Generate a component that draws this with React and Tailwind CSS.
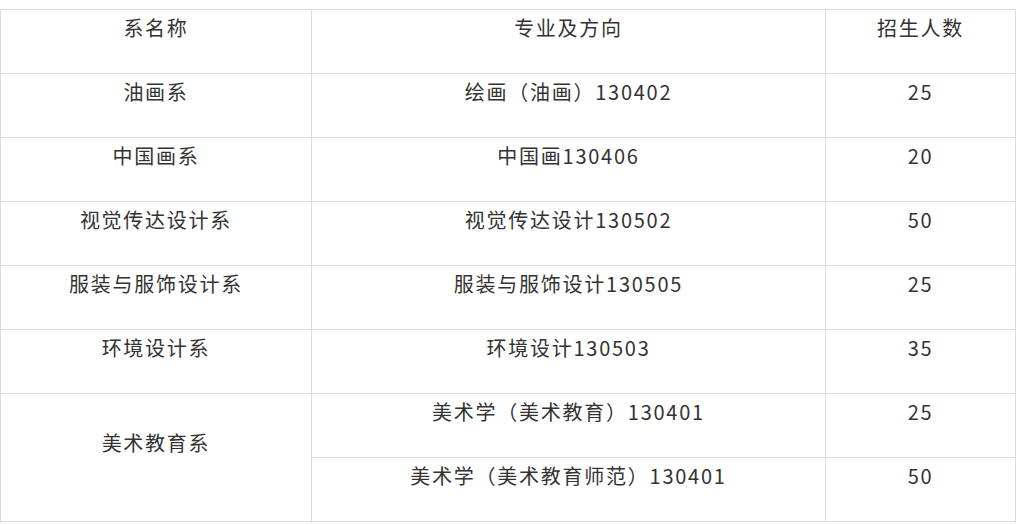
import React from "react";

const rows = [
  { dept: "油画系", majors: [["绘画（油画）130402", "25"]] },
  { dept: "中国画系", majors: [["中国画130406", "20"]] },
  { dept: "视觉传达设计系", majors: [["视觉传达设计130502", "50"]] },
  { dept: "服装与服饰设计系", majors: [["服装与服饰设计130505", "25"]] },
  { dept: "环境设计系", majors: [["环境设计130503", "35"]] },
  {
    dept: "美术教育系",
    majors: [
      ["美术学（美术教育）130401", "25"],
      ["美术学（美术教育师范）130401", "50"],
    ],
  },
];

const cell = "border border-[#dcdcdc] h-[64px] p-0 align-top text-center";
const txt = "pt-[3px] leading-[30px]";

const App = () => {
  return (
    <div
      className="bg-white w-[1018px] h-[525px] pt-[9px] text-[#333] text-[20px] tracking-[1.75px]"
      style={{ fontFamily: '"Noto Sans CJK SC", "Noto Sans", sans-serif' }}
    >
      <table className="border-collapse table-fixed w-[1015px]">
        <colgroup>
          <col className="w-[311px]" />
          <col className="w-[514px]" />
          <col className="w-[190px]" />
        </colgroup>
        <tbody>
          <tr>
            <td className={cell}><div className={txt}>系名称</div></td>
            <td className={cell}><div className={txt}>专业及方向</div></td>
            <td className={cell}><div className={txt}>招生人数</div></td>
          </tr>
          {rows.map((r) =>
            r.majors.map((m, i) => (
              <tr key={r.dept + i}>
                {i === 0 && (
                  <td className={cell} rowSpan={r.majors.length}>
                    <div className={r.majors.length > 1 ? "pt-[34px] leading-[30px]" : txt}>
                      {r.dept}
                    </div>
                  </td>
                )}
                <td className={cell}><div className={txt}>{m[0]}</div></td>
                <td className={cell}><div className={txt}>{m[1]}</div></td>
              </tr>
            ))
          )}
        </tbody>
      </table>
    </div>
  );
};

export default App;
